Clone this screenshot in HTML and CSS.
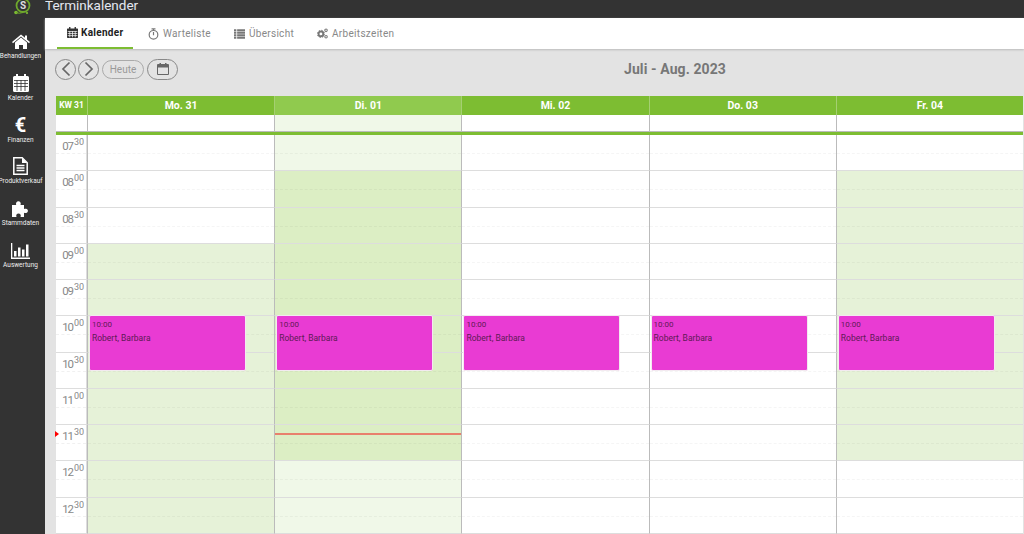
FILE: index.html
```html
<!DOCTYPE html>
<html lang="de">
<head>
<meta charset="utf-8">
<title>Terminkalender</title>
<link rel="stylesheet" href="styles.css">
</head>
<body>
<div class="app">
  <aside class="sidebar">
    <div class="logo">
      <svg width="20" height="18" viewBox="0 0 20 18"><circle cx="10" cy="5.500" r="6.500" fill="none" stroke="#6fa82c" stroke-width="1.800"/><circle cx="3" cy="12.500" r="1.800" fill="#7dbd32"/><circle cx="14" cy="13" r="1.100" fill="#7dbd32"/><path d="M3 12.500q3 1.500 7 0" fill="none" stroke="#6fa82c"/></svg>
      <span class="logo-s">S</span>
    </div>
    <a class="nav-item">
      <svg class="nav-icon" width="18" height="16" viewBox="0 0 18 16"><path fill="#fff" d="M9 3.600 3 8.500V15h4v-4h4v4h4V8.500z"/><path fill="#fff" d="M9 .5 0 8l1 1.200 8-6.700 8 6.700L18 8l-3-2.500V1.500h-2v2.300z"/></svg>
      <span>Behandlungen</span>
    </a>
    <a class="nav-item">
      <svg class="nav-icon" width="16" height="18" viewBox="0 0 16 18"><path fill="#fff" d="M1.500 2H3V0h2v2h6V0h2v2h1.500A1.500 1.500 0 0 1 16 3.500v13a1.500 1.500 0 0 1-1.500 1.500h-13A1.500 1.500 0 0 1 0 16.500v-13A1.500 1.500 0 0 1 1.500 2z"/><path stroke="#333" stroke-width=".8" d="M1 6.500h14M1 9.500h14M1 12.500h14M4 6v11M8 6v11M12 6v11"/></svg>
      <span>Kalender</span>
    </a>
    <a class="nav-item">
      <span class="nav-glyph">€</span>
      <span>Finanzen</span>
    </a>
    <a class="nav-item">
      <svg class="nav-icon" width="15" height="18" viewBox="0 0 15 18"><path fill="none" stroke="#fff" stroke-width="1.500" d="M.8.800h8.400l5 5v11.400H.8z"/><path fill="#fff" d="M9 1v5h5z"/><path stroke="#fff" stroke-width="1.300" d="M3.500 8.500h8M3.500 11h8M3.500 13.500h8"/></svg>
      <span>Produktverkauf</span>
    </a>
    <a class="nav-item">
      <svg class="nav-icon" width="17" height="16" viewBox="0 0 17 16"><path fill="#fff" d="M0 4h4.200C4 2.800 3.800 2.300 4.500 1.200 5.300 0 7.500 0 8.300 1.200 9 2.300 8.800 2.800 8.500 4H12v4c1-.4 1.700-.4 2.800 0 1.500.7 1.500 3 0 3.700-1 .5-1.800.4-2.800 0V16H8.500c.4-1 .4-1.700 0-2.500-.8-1.400-3.200-1.400-4 0-.4.800-.4 1.500 0 2.500H0z"/></svg>
      <span>Stammdaten</span>
    </a>
    <a class="nav-item">
      <svg class="nav-icon" width="19" height="16" viewBox="0 0 19 16"><path fill="#fff" d="M0 0h1.300v14.500H19V16H0zM3 8h2.500v5.500H3zM7 4.500h2.500v9H7zM11 6.500h2.500v7H11zM15 1.500h2.500v12H15z"/></svg>
      <span>Auswertung</span>
    </a>
  </aside>
  <div class="main">
    <header class="topbar"><h1 class="title">Terminkalender</h1></header>
    <nav class="tabs">
      <a class="tab tab-active">
        <svg width="11" height="11" viewBox="0 0 16 16"><path fill="#333" d="M1 2h2V0h2v2h6V0h2v2h2a1 1 0 0 1 1 1v12a1 1 0 0 1-1 1H1a1 1 0 0 1-1-1V3a1 1 0 0 1 1-1z"/><path stroke="#fff" d="M1 6.500h14M1 9.500h14M1 12.500h14M4 6v9M8 6v9M12 6v9"/></svg>
        Kalender
      </a>
      <a class="tab">
        <svg width="11" height="12" viewBox="0 0 14 15"><circle cx="7" cy="8.500" r="5.500" fill="none" stroke="#777" stroke-width="1.500"/><path stroke="#777" stroke-width="1.500" d="M4.500 1h5M7 1v2M7 5v4"/></svg>
        Warteliste
      </a>
      <a class="tab">
        <svg width="11" height="10" viewBox="0 0 14 12"><path fill="#777" d="M0 0h3v2.500H0zM4 0h10v2.500H4zM0 3.200h3v2.500H0zM4 3.200h10v2.500H4zM0 6.400h3v2.500H0zM4 6.400h10v2.500H4zM0 9.500h3V12H0zM4 9.500h10V12H4z"/></svg>
        Übersicht
      </a>
      <a class="tab">
        <svg width="11" height="11" viewBox="0 0 14 14"><circle cx="5" cy="7.500" r="3" fill="none" stroke="#777" stroke-width="2.400"/><circle cx="5" cy="7.500" r="4.600" fill="none" stroke="#777" stroke-width="1.200" stroke-dasharray="1.800 1.800"/><circle cx="11.500" cy="3" r="1.600" fill="none" stroke="#777" stroke-width="1.300"/><circle cx="11.500" cy="11" r="1.600" fill="none" stroke="#777" stroke-width="1.300"/></svg>
        Arbeitszeiten
      </a>
    </nav>
    <section class="content">
      <div class="toolbar">
        <div class="tools">
          <button class="round-btn" aria-label="Zurück"><svg width="10" height="16" viewBox="0 0 10 16"><path d="M8.500 1.500 2 8l6.500 6.500" fill="none" stroke="#666" stroke-width="1.700"/></svg></button>
          <button class="round-btn" aria-label="Weiter"><svg width="10" height="16" viewBox="0 0 10 16"><path d="M1.500 1.500 8 8l-6.500 6.500" fill="none" stroke="#666" stroke-width="1.700"/></svg></button>
          <button class="pill-btn">Heute</button>
          <button class="cal-btn" aria-label="Datum"><svg width="12" height="12" viewBox="0 0 12 12"><path fill="#666" d="M1 1h1.500V0h1.500v1h4V0h1.500v1H11a1 1 0 0 1 1 1v9a1 1 0 0 1-1 1H1a1 1 0 0 1-1-1V2a1 1 0 0 1 1-1zm0 3.500V11h10V4.500z"/></svg></button>
        </div>
        <h2 class="range">Juli - Aug. 2023</h2>
      </div>
      <div class="calendar">
        <div class="head-row">
          <div class="head week">KW 31</div>
          <div class="head">Mo. 31</div>
          <div class="head head-today">Di. 01</div>
          <div class="head">Mi. 02</div>
          <div class="head">Do. 03</div>
          <div class="head">Fr. 04</div>
        </div>
        <div class="allday-row">
          <div class="allday"></div>
          <div class="allday"></div>
          <div class="allday today-light"></div>
          <div class="allday"></div>
          <div class="allday"></div>
          <div class="allday"></div>
        </div>
        <div class="divider"></div>
        <div class="slots">
          <div class="row">
            <div class="time">07<sup>30</sup></div>
            <div class="cell"></div><div class="cell today-light"></div><div class="cell"></div><div class="cell"></div><div class="cell"></div>
          </div>
          <div class="row">
            <div class="time">08<sup>00</sup></div>
            <div class="cell"></div><div class="cell today-open"></div><div class="cell"></div><div class="cell"></div><div class="cell open"></div>
          </div>
          <div class="row">
            <div class="time">08<sup>30</sup></div>
            <div class="cell"></div><div class="cell today-open"></div><div class="cell"></div><div class="cell"></div><div class="cell open"></div>
          </div>
          <div class="row">
            <div class="time">09<sup>00</sup></div>
            <div class="cell open"></div><div class="cell today-open"></div><div class="cell"></div><div class="cell"></div><div class="cell open"></div>
          </div>
          <div class="row">
            <div class="time">09<sup>30</sup></div>
            <div class="cell open"></div><div class="cell today-open"></div><div class="cell"></div><div class="cell"></div><div class="cell open"></div>
          </div>
          <div class="row">
            <div class="time">10<sup>00</sup></div>
            <div class="cell open"><div class="event"><div class="event-time">10:00</div><div class="event-name">Robert, Barbara</div></div></div>
            <div class="cell today-open"><div class="event"><div class="event-time">10:00</div><div class="event-name">Robert, Barbara</div></div></div>
            <div class="cell"><div class="event"><div class="event-time">10:00</div><div class="event-name">Robert, Barbara</div></div></div>
            <div class="cell"><div class="event"><div class="event-time">10:00</div><div class="event-name">Robert, Barbara</div></div></div>
            <div class="cell open"><div class="event"><div class="event-time">10:00</div><div class="event-name">Robert, Barbara</div></div></div>
          </div>
          <div class="row">
            <div class="time">10<sup>30</sup></div>
            <div class="cell open"></div><div class="cell today-open"></div><div class="cell"></div><div class="cell"></div><div class="cell open"></div>
          </div>
          <div class="row">
            <div class="time">11<sup>00</sup></div>
            <div class="cell open"></div><div class="cell today-open"></div><div class="cell"></div><div class="cell"></div><div class="cell open"></div>
          </div>
          <div class="row">
            <div class="time"><span class="now-arrow"></span>11<sup>30</sup></div>
            <div class="cell open"></div><div class="cell today-open"><span class="now-line"></span></div><div class="cell"></div><div class="cell"></div><div class="cell open"></div>
          </div>
          <div class="row">
            <div class="time">12<sup>00</sup></div>
            <div class="cell open"></div><div class="cell today-light"></div><div class="cell"></div><div class="cell"></div><div class="cell"></div>
          </div>
          <div class="row">
            <div class="time">12<sup>30</sup></div>
            <div class="cell open"></div><div class="cell today-light"></div><div class="cell"></div><div class="cell"></div><div class="cell"></div>
          </div>
        </div>
      </div>
    </section>
  </div>
</div>
</body>
</html>
```
FILE: styles.css
```css
* { box-sizing: border-box; }
html, body { margin: 0; height: 534px; overflow: hidden; }
body { font-family: Roboto, "Liberation Sans", sans-serif; background: #e3e3e3; }
.app { display: flex; height: 534px; }

.sidebar { width: 45px; flex: none; background: #333; display: flex; flex-direction: column; align-items: center; padding-right: 4px; }
.logo { position: relative; height: 23.500px; width: 45px; flex: none; display: flex; justify-content: center; margin-left: 4px; }
.logo-s { position: absolute; left: 20px; top: 0; font-size: 10px; line-height: 12px; font-weight: 700; color: #ddd; }
.nav-item { height: 41.700px; width: 60px; flex: none; display: flex; flex-direction: column; align-items: center; justify-content: flex-end; color: #eee; font-size: 6.500px; line-height: 9px; padding-bottom: 4px; white-space: nowrap; }
.nav-icon { display: block; margin-bottom: 2px; }
.nav-glyph { font-size: 20px; line-height: 19px; font-weight: 700; color: #fff; margin-bottom: 1px; }

.main { flex: 1; min-width: 0; display: flex; flex-direction: column; }
.topbar { height: 18px; flex: none; background: #333; overflow: hidden; }
.title { margin: -3.500px 0 0; font-size: 13.500px; font-weight: 400; line-height: 17px; color: #e4e8f0; }
.tabs { height: 31px; flex: none; background: #fff; display: flex; box-shadow: 0 1px 2px #bbb; padding-left: 12px; position: relative; }
.tab { display: flex; align-items: center; gap: 4px; font-size: 10px; color: #888; letter-spacing: .3px; margin-right: 23px; height: 31px; white-space: nowrap; }
.tab-active { color: #222; font-weight: 700; border-bottom: 2px solid #7dbd32; margin-right: 14.500px; padding: 0 10px; gap: 3px; }

.content { flex: 1; min-height: 0; padding-left: 11px; display: flex; flex-direction: column; }
.toolbar { height: 47px; flex: none; display: flex; align-items: center; padding-bottom: 7px; }
.tools { display: flex; gap: 2px; margin-left: -1px; }
.round-btn { width: 21px; height: 21px; padding: 0; border: 1px solid #888; border-radius: 50%; background: transparent; display: flex; align-items: center; justify-content: center; }
.pill-btn { width: 42px; height: 19px; margin: 1px 0 0 1px; padding: 0; border: 1px solid #aaa; border-radius: 10px; background: transparent; color: #999; font: 10px Roboto, sans-serif; }
.cal-btn { width: 31px; height: 21px; margin-left: 1px; padding: 0; border: 1px solid #888; border-radius: 11px; background: transparent; display: flex; align-items: center; justify-content: center; }
.range { flex: 1; margin: 0 0 0 148px; text-align: center; font-size: 14px; font-weight: 700; color: #777; letter-spacing: .1px; }

.calendar { flex: 1; min-height: 0; display: flex; flex-direction: column; margin-right: 1px; background: #fff; }
.head-row, .allday-row, .row { display: grid; grid-template-columns: 31px repeat(5, 1fr); }
.head-row { height: 19px; background: #7dbd32; }
.head { font-size: 10.500px; font-weight: 700; color: #fff; text-align: center; line-height: 19px; border-left: 1px solid #a5cf72; }
.week { border-left: 0; font-size: 8.500px; }
.head-today { background: #90ca4e; }
.allday-row { height: 16px; background: #fff; }
.allday { border-left: 1px solid #bbb; }
.allday:first-child { border-left: 0; }
.divider { height: 4px; flex: none; background: #7dbd32; border-top: 1px solid #bbb; }

.slots { flex: 1; min-height: 0; display: grid; grid-auto-rows: 1fr; }
.time { position: relative; background: #fff; border-bottom: 1px solid #ddd; border-right: 1px solid #ddd; font-size: 11.500px; letter-spacing: -1.200px; color: #888; text-align: right; padding: 3px 2px 0 0; line-height: 16px; }
.time sup { font-size: 9px; letter-spacing: 0; line-height: 0; vertical-align: 5px; margin-left: 1px; }
.cell { position: relative; border-left: 1px solid #bbb; border-bottom: 1px solid #ddd; background: #fff; }
.time::before { content: ""; position: absolute; left: 0; right: 0; top: 18px; border-top: 1px dashed #f0f0f0; }
.cell::before { content: ""; position: absolute; left: 0; right: 0; top: 18px; border-top: 1px dashed rgba(0, 0, 0, .04); }
.open { background: #e6f2d8; }
.today-open { background: #dceec4; }
.today-light { background: #f0f8e8; }

.event { position: absolute; z-index: 2; left: 1px; top: -1px; width: 157px; height: 56px; background: #e93bd3; border: 1px solid #f3eaf0; border-radius: 2px; color: #5e1a55; padding: 4px 2px; font-size: 8px; line-height: 10px; }
.event-name { margin-top: 2px; font-size: 8.500px; line-height: 12px; }
.now-line { position: absolute; left: 0; right: 0; top: 8px; height: 2px; background: #e8806c; z-index: 1; }
.now-arrow { position: absolute; left: -1px; top: 6px; width: 0; height: 0; border-left: 4px solid #f00; border-top: 3px solid transparent; border-bottom: 3px solid transparent; }
```
